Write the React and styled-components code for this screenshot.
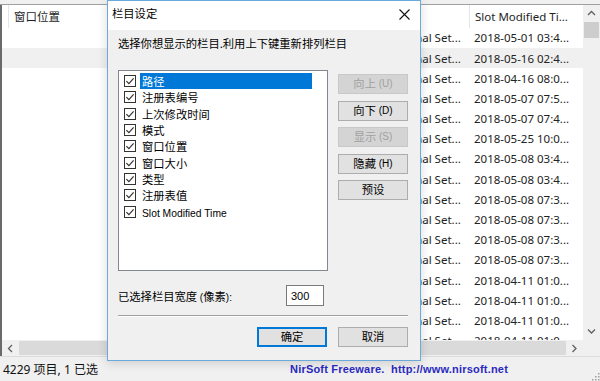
import React from 'react';
import styled, { createGlobalStyle } from 'styled-components';

const GlobalStyle = createGlobalStyle`
  html, body { margin: 0; padding: 0; background: #fff; }
  body {
    width: 600px; height: 381px; overflow: hidden;
    font-family: "Noto Sans", "Noto Sans CJK SC", sans-serif;
    font-size: 12px; color: #000;
  }
  #root { width: 600px; height: 381px; }
`;

const Window = styled.div`
  position: relative;
  width: 600px;
  height: 381px;
  display: flex;
  flex-direction: column;
  background: #fff;
  overflow: hidden;
`;

const TopStrip = styled.div`
  flex: none;
  height: 4px;
  background: #f0f0f0;
  border-bottom: 1px solid #a0a0a0;
`;

const ListFrame = styled.div`
  flex: 1;
  min-height: 0;
  display: grid;
  grid-template-columns: 1fr 17px;
  grid-template-rows: 1fr 16px;
  border-left: 2px solid #6a6a6a;
`;

const ListView = styled.div`
  overflow: hidden;
  background: #fff;
  font-size: 11.5px;
`;

const COLS = '6px 378px 83px 1fr';

const HeaderRow = styled.div`
  display: grid;
  grid-template-columns: ${COLS};
  height: 23px;
`;

const HeaderCell = styled.div`
  display: flex;
  align-items: center;
  padding: 0 5px;
  border-left: ${(p) => (p.$first ? 'none' : '1px solid #e5e5e5')};
  white-space: nowrap;
  overflow: hidden;
  color: #1e1e1e;
  line-height: 1;
`;

const Row = styled.div`
  display: grid;
  grid-template-columns: ${COLS};
  height: 20.2px;
  background: ${(p) => (p.$selected ? '#f0f0f0' : 'transparent')};
`;

const Cell = styled.div`
  display: flex;
  align-items: center;
  padding: 0 5px;
  white-space: nowrap;
  overflow: hidden;
  color: #222;
  line-height: 1;
`;

const VScroll = styled.div`
  background: #f0f0f0;
  display: flex;
  flex-direction: column;
`;

const HScroll = styled.div`
  background: #f0f0f0;
  display: flex;
  align-items: stretch;
`;

const ArrowBox = styled.div`
  flex: none;
  width: 17px;
  height: ${(p) => (p.$h ? '16px' : '17px')};
  display: flex;
  align-items: center;
  justify-content: center;
`;

const VThumb = styled.div`
  flex: none;
  height: 16px;
  margin: 0 1px;
  background: #cdcdcd;
`;

const Track = styled.div`
  flex: 1;
`;

const HThumb = styled.div`
  flex: 1;
  margin: 1px 0;
  background: #dadada;
`;

const Corner = styled.div`
  background: #f0f0f0;
`;

const StatusBar = styled.div`
  flex: none;
  height: 24px;
  background: #f0f0f0;
  border-top: 1px solid #dcdcdc;
  display: grid;
  grid-template-columns: 284px 1fr 14px;
  align-items: center;
`;

const StatusText = styled.div`
  padding-left: 3px;
  white-space: nowrap;
  color: #111;
`;

const NirText = styled.div`
  padding-left: 6px;
  font-family: "Liberation Sans", Arial, sans-serif;
  font-weight: bold;
  font-size: 11px;
  letter-spacing: 0.2px;
  color: #2a2ac0;
  white-space: nowrap;
`;

const Grip = styled.div`
  align-self: end;
  height: 14px;
  display: flex;
  align-items: flex-end;
  justify-content: flex-end;
`;

/* ---------- Dialog ---------- */

const Dialog = styled.div`
  position: absolute;
  left: 107px;
  top: 0;
  width: 314px;
  height: 361px;
  box-sizing: border-box;
  border: 1px solid #6aa9d9;
  background: #f0f0f0;
  display: flex;
  flex-direction: column;
  font-family: "Noto Sans CJK SC", "Noto Sans", sans-serif;
  font-size: 11.3px;
  box-shadow: 0 2px 10px rgba(0, 0, 0, 0.15);
`;

const Latin = styled.span`
  font-family: "Liberation Sans", Arial, sans-serif;
  font-size: ${(p) => p.$size || '10px'};
`;

const TitleBar = styled.div`
  flex: none;
  height: 29px;
  background: #fff;
  display: flex;
  align-items: center;
  justify-content: space-between;
  padding-left: 4px;
  padding-right: 10px;
`;

const TitleText = styled.div`
  line-height: 1;
  color: #000;
  margin-top: -4px;
`;

const CloseBox = styled.div`
  width: 11px;
  height: 11px;
  display: flex;
  margin-top: -2px;
`;

const Body = styled.div`
  flex: 1;
  display: flex;
  flex-direction: column;
  padding: 6px 12px 0 10px;
`;

const Prompt = styled.div`
  height: 14px;
  line-height: 14px;
  white-space: nowrap;
`;

const MainRow = styled.div`
  display: flex;
  gap: 10px;
  margin-top: 20px;
`;

const ListBox = styled.div`
  box-sizing: border-box;
  width: 210px;
  height: 201px;
  background: #fff;
  border: 1px solid #828790;
  padding-top: 2px;
`;

const Item = styled.div`
  display: flex;
  align-items: center;
  height: 16.3px;
`;

const CheckWrap = styled.div`
  flex: none;
  width: 12px;
  height: 12px;
  margin-left: 5px;
  display: flex;
`;

const ItemLabel = styled.div`
  margin-left: 4px;
  width: 170px;
  height: 16px;
  line-height: 16px;
  padding-left: 2px;
  white-space: nowrap;
  background: ${(p) => (p.$selected ? '#0078d7' : 'transparent')};
  color: ${(p) => (p.$selected ? '#fff' : '#000')};
`;

const ButtonCol = styled.div`
  display: flex;
  flex-direction: column;
  gap: 6.5px;
  margin-top: 4px;
`;

const Button = styled.div`
  box-sizing: border-box;
  width: 70px;
  height: 20px;
  display: flex;
  align-items: center;
  justify-content: center;
  background: ${(p) => (p.$disabled ? '#d4d4d4' : '#e1e1e1')};
  border: 1px solid
    ${(p) => (p.$default ? '#0078d7' : p.$disabled ? '#c8c8c8' : '#adadad')};
  box-shadow: ${(p) => (p.$default ? 'inset 0 0 0 1px #0078d7' : 'none')};
  color: ${(p) => (p.$disabled ? '#a0a0a0' : '#000')};
  line-height: 1;
  white-space: pre;
`;

const WidthRow = styled.div`
  display: flex;
  align-items: center;
  margin-top: 14px;
  height: 21px;
`;

const WidthLabel = styled.div`
  width: 168px;
  white-space: pre;
`;

const NumInput = styled.div`
  box-sizing: border-box;
  width: 38px;
  height: 21px;
  background: #fff;
  border: 1px solid #7a7a7a;
  padding-left: 4px;
  display: flex;
  align-items: center;
`;

const Separator = styled.div`
  margin-top: 9px;
  height: 0;
  border-top: 1px solid #a0a0a0;
  border-bottom: 1px solid #fff;
`;

const FooterRow = styled.div`
  display: flex;
  justify-content: flex-end;
  gap: 11px;
  margin-top: 10px;
`;

const Check = () => (
  <svg width="12" height="12" viewBox="0 0 12 12">
    <rect x="0.5" y="0.5" width="11" height="11" fill="#fff" stroke="#333" />
    <path d="M2.4 6.1 L4.9 8.6 L9.6 3.4" fill="none" stroke="#333" strokeWidth="1.2" />
  </svg>
);

const Chevron = ({ dir }) => {
  const paths = {
    up: 'M1 5 L4.5 1.5 L8 5',
    down: 'M1 1.5 L4.5 5 L8 1.5',
    left: 'M5 1 L1.5 4.5 L5 8',
    right: 'M1.5 1 L5 4.5 L1.5 8',
  };
  const vert = dir === 'up' || dir === 'down';
  return (
    <svg width={vert ? 9 : 7} height={vert ? 7 : 9} viewBox={vert ? '0 0 9 7' : '0 0 7 9'}>
      <path d={paths[dir]} fill="none" stroke="#606060" strokeWidth="1.3" />
    </svg>
  );
};

const dates = [
  '2018-05-01 03:4...',
  '2018-05-16 02:4...',
  '2018-04-16 08:0...',
  '2018-05-07 07:5...',
  '2018-05-07 07:4...',
  '2018-05-25 10:0...',
  '2018-05-08 03:4...',
  '2018-05-08 03:4...',
  '2018-05-08 07:3...',
  '2018-05-08 07:3...',
  '2018-05-08 07:3...',
  '2018-05-08 07:3...',
  '2018-04-11 01:0...',
  '2018-04-11 01:0...',
  '2018-04-11 01:0...',
  '2018-04-11 01:0...',
];

const items = ['路径', '注册表编号', '上次修改时间', '模式', '窗口位置', '窗口大小', '类型', '注册表值'];

const buttons = [
  { zh: '向上', key: '(U)', disabled: true },
  { zh: '向下', key: '(D)' },
  { zh: '显示', key: '(S)', disabled: true },
  { zh: '隐藏', key: '(H)' },
  { zh: '预设' },
];

export default function App() {
  return (
    <>
      <GlobalStyle />
      <Window>
        <TopStrip />
        <ListFrame>
          <ListView>
            <HeaderRow>
              <HeaderCell $first />
              <HeaderCell>窗口位置</HeaderCell>
              <HeaderCell />
              <HeaderCell>Slot Modified Ti...</HeaderCell>
            </HeaderRow>
            {dates.map((d, i) => (
              <Row key={i} $selected={i === 1}>
                <Cell />
                <Cell />
                <Cell>Normal Set...</Cell>
                <Cell>{d}</Cell>
              </Row>
            ))}
          </ListView>
          <VScroll>
            <ArrowBox><Chevron dir="up" /></ArrowBox>
            <VThumb />
            <Track />
            <ArrowBox><Chevron dir="down" /></ArrowBox>
          </VScroll>
          <HScroll>
            <ArrowBox $h><Chevron dir="left" /></ArrowBox>
            <HThumb />
            <ArrowBox $h><Chevron dir="right" /></ArrowBox>
          </HScroll>
          <Corner />
        </ListFrame>
        <StatusBar>
          <StatusText>4229 项目, 1 已选</StatusText>
          <NirText>NirSoft Freeware.&nbsp;&nbsp;http://www.nirsoft.net</NirText>
          <Grip>
            <svg width="12" height="12" viewBox="0 0 12 12">
              {[[10, 4], [10, 7], [7, 7], [10, 10], [7, 10], [4, 10]].map(([x, y], k) => (
                <rect key={k} x={x} y={y} width="1.5" height="1.5" fill="#a0a0a0" />
              ))}
            </svg>
          </Grip>
        </StatusBar>

        <Dialog>
          <TitleBar>
            <TitleText>栏目设定</TitleText>
            <CloseBox>
              <svg width="11" height="11" viewBox="0 0 11 11">
                <path d="M0.5 0.5 L10.5 10.5 M10.5 0.5 L0.5 10.5" stroke="#111" strokeWidth="1.1" />
              </svg>
            </CloseBox>
          </TitleBar>
          <Body>
            <Prompt>选择你想显示的栏目.利用上下键重新排列栏目</Prompt>
            <MainRow>
              <ListBox>
                {items.map((t, i) => (
                  <Item key={t}>
                    <CheckWrap><Check /></CheckWrap>
                    <ItemLabel $selected={i === 0}>{t}</ItemLabel>
                  </Item>
                ))}
                <Item>
                  <CheckWrap><Check /></CheckWrap>
                  <ItemLabel><Latin $size="10.3px">Slot Modified Time</Latin></ItemLabel>
                </Item>
              </ListBox>
              <ButtonCol>
                {buttons.map((b) => (
                  <Button key={b.zh} $disabled={b.disabled}>
                    {b.zh}
                    {b.key && <Latin>{' ' + b.key}</Latin>}
                  </Button>
                ))}
              </ButtonCol>
            </MainRow>
            <WidthRow>
              <WidthLabel>
                已选择栏目宽度<Latin> (</Latin>像素<Latin>):</Latin>
              </WidthLabel>
              <NumInput><Latin $size="11px">300</Latin></NumInput>
            </WidthRow>
            <Separator />
            <FooterRow>
              <Button $default>确定</Button>
              <Button>取消</Button>
            </FooterRow>
          </Body>
        </Dialog>
      </Window>
    </>
  );
}
